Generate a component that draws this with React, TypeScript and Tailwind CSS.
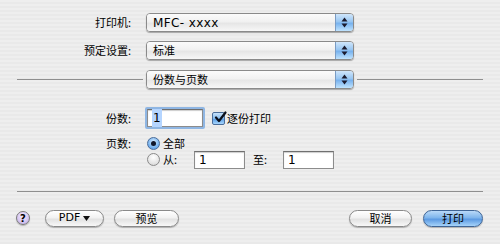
import React from "react";

const cjk = { fontFamily: '"Noto Sans CJK SC", "DejaVu Sans", sans-serif' };
const latin = { fontFamily: '"DejaVu Sans", "Noto Sans CJK SC", sans-serif' };

function Arrows() {
  return (
    <svg width="7" height="11" viewBox="0 0 7 11">
      <path d="M3.5 0.5 L6.5 4.5 L0.5 4.5 Z" fill="#1a1a2e" />
      <path d="M0.5 6.5 L6.5 6.5 L3.5 10.5 Z" fill="#1a1a2e" />
    </svg>
  );
}

function Popup({ children, latinText }: { children: React.ReactNode; latinText?: boolean }) {
  return (
    <div className="flex h-[19px] w-[208px] overflow-hidden rounded-[4px] border border-[#8a8a8a] shadow-[0_1px_1px_rgba(0,0,0,0.3)]">
      <div
        className="flex flex-1 items-center pl-[6px] text-[11px] text-black bg-[linear-gradient(#fbfbfb,#f1f1f1_45%,#e6e6e6_55%,#f7f7f7)]"
        style={latinText ? { ...latin, fontSize: 12, letterSpacing: 0.4 } : cjk}
      >
        {children}
      </div>
      <div className="flex w-[18px] items-center justify-center border-l border-[#7a9cc4] bg-[linear-gradient(#d0e6fb,#98c6f2_45%,#78b2ee_55%,#bfe3fe)]">
        <Arrows />
      </div>
    </div>
  );
}

function Line({ w }: { w: number }) {
  return <div className="h-px bg-[#8f8f8f]" style={{ width: w }} />;
}

function TextField({ w, focused }: { w: number; focused?: boolean }) {
  return (
    <div className={focused ? "rounded-[2px] p-[2px] bg-[#8fb6e3]" : "p-0"}>
      <div
        className="flex h-[18px] items-center border border-[#8c8c8c] border-t-[#6f6f6f] bg-white pl-[4px] text-[12px] text-black shadow-[inset_0_1px_1px_rgba(0,0,0,0.2)]"
        style={{ width: w, ...latin }}
      >
        <span className={focused ? "bg-[#b5d5ff] px-[1px]" : ""}>1</span>
      </div>
    </div>
  );
}

function Radio({ on }: { on?: boolean }) {
  return (
    <div
      className={
        "flex h-[13px] w-[13px] items-center justify-center rounded-full border " +
        (on
          ? "border-[#4a6d9a] bg-[radial-gradient(circle_at_50%_35%,#d7ecff,#7ab4ee_60%,#4d8ee0)]"
          : "border-[#8a8a8a] bg-[radial-gradient(circle_at_50%_30%,#ffffff,#e6e6e6_60%,#cfcfcf)]")
      }
    >
      {on && <div className="h-[5px] w-[5px] rounded-full bg-[#10162a]" />}
    </div>
  );
}

function Checkbox() {
  return (
    <div className="relative flex h-[13px] w-[13px] items-center justify-center rounded-[2px] border border-[#4a6d9a] bg-[linear-gradient(#c9e3fb,#84bbef_50%,#5c9fe6_55%,#a7d6fd)]">
      <svg width="13" height="13" viewBox="0 0 13 13" className="absolute left-[1px] top-[-2px]">
        <path d="M2 6.5 L5 10 L11.5 1.5" stroke="#0b0f1a" strokeWidth="2.2" fill="none" strokeLinecap="round" strokeLinejoin="round" />
      </svg>
    </div>
  );
}

function Button({ w, children, primary, font }: { w: number; children: React.ReactNode; primary?: boolean; font?: React.CSSProperties }) {
  return (
    <div
      className={
        "flex h-[17px] items-center justify-center rounded-full border text-[11px] text-black shadow-[0_1px_1px_rgba(0,0,0,0.25)] " +
        (primary
          ? "border-[#3f6596] bg-[linear-gradient(#b9d9f8,#7fb5ec_45%,#5c9ae2_55%,#a6d3fa)]"
          : "border-[#8a8a8a] bg-[linear-gradient(#ffffff,#f2f2f2_45%,#e2e2e2_55%,#f8f8f8)]")
      }
      style={{ width: w, ...(font ?? cjk) }}
    >
      {children}
    </div>
  );
}

export default function App() {
  return (
    <div className="h-[244px] w-[500px] overflow-hidden bg-[repeating-linear-gradient(#eeeeee_0px,#eeeeee_2px,#e9e9e9_2px,#e9e9e9_4px)] text-black">
      <div className="flex flex-col pt-[13px]">
        <div className="flex items-center">
          <div className="w-[131px] text-right text-[11px]" style={cjk}>打印机:</div>
          <div className="ml-[15px]">
            <Popup latinText>MFC- xxxx</Popup>
          </div>
        </div>
        <div className="mt-[9px] flex items-center">
          <div className="w-[131px] text-right text-[11px]" style={cjk}>预定设置:</div>
          <div className="ml-[15px]">
            <Popup>标准</Popup>
          </div>
        </div>
        <div className="mt-[10px] flex items-center">
          <div className="ml-[17px]"><Line w={126} /></div>
          <div className="ml-[3px]">
            <Popup>份数与页数</Popup>
          </div>
          <div className="ml-[3px]"><Line w={126} /></div>
        </div>

        <div className="ml-[106px] mt-[18px] flex items-center">
          <div className="w-[39px] text-[11px]" style={cjk}>份数:</div>
          <TextField w={56} focused />
          <div className="ml-[7px]"><Checkbox /></div>
          <div className="ml-[2px] text-[11px]" style={cjk}>逐份打印</div>
        </div>

        <div className="ml-[106px] mt-[6px] flex">
          <div className="w-[41px] text-[11px]" style={cjk}>页数:</div>
          <div className="flex flex-col">
            <div className="flex items-center">
              <Radio on />
              <div className="ml-[3px] text-[11px]" style={cjk}>全部</div>
            </div>
            <div className="mt-[-1px] flex items-center">
              <Radio />
              <div className="ml-[3px] w-[31px] text-[11px]" style={cjk}>从:</div>
              <TextField w={51} />
              <div className="ml-[8px] w-[30px] text-[11px]" style={cjk}>至:</div>
              <TextField w={51} />
            </div>
          </div>
        </div>

        <div className="ml-[17px] mt-[22px]"><Line w={466} /></div>

        <div className="mt-[18px] flex items-center">
          <div className="ml-[16px] flex h-[14px] w-[14px] items-center justify-center rounded-full border border-[#7a7a7a] bg-[radial-gradient(circle_at_50%_35%,#f3ecff,#d6c6f2_60%,#b8a6de)] text-[10px] font-bold shadow-[0_1px_1px_rgba(0,0,0,0.25)]" style={latin}>?</div>
          <div className="ml-[15px]">
            <Button w={59} font={latin}>
              <span className="flex items-center gap-[3px]">PDF<svg width="7" height="5" viewBox="0 0 7 5"><path d="M0 0 L7 0 L3.5 5 Z" fill="#111" /></svg></span>
            </Button>
          </div>
          <div className="ml-[10px]">
            <Button w={65}>预览</Button>
          </div>
          <div className="ml-[170px]">
            <Button w={63}>取消</Button>
          </div>
          <div className="ml-[11px]">
            <Button w={60} primary>打印</Button>
          </div>
        </div>
      </div>
    </div>
  );
}
